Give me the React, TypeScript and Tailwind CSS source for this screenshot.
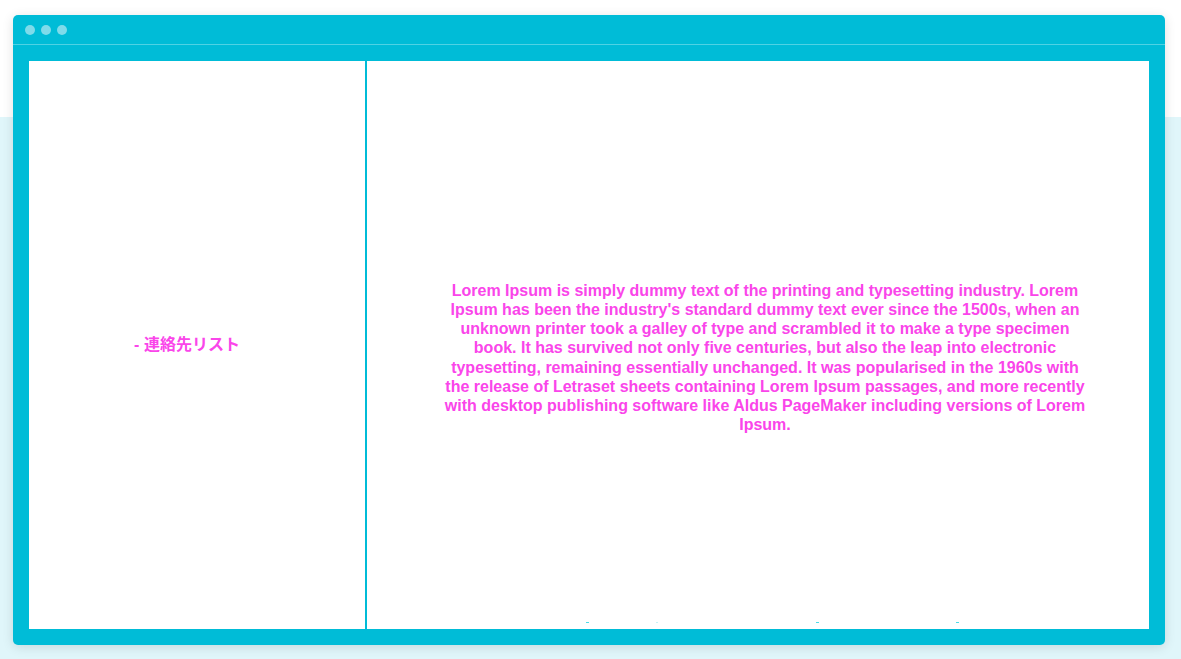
export default function App() {
  const lorem =
    "Lorem Ipsum is simply dummy text of the printing and typesetting industry. Lorem Ipsum has been the industry's standard dummy text ever since the 1500s, when an unknown printer took a galley of type and scrambled it to make a type specimen book. It has survived not only five centuries, but also the leap into electronic typesetting, remaining essentially unchanged. It was popularised in the 1960s with the release of Letraset sheets containing Lorem Ipsum passages, and more recently with desktop publishing software like Aldus PageMaker including versions of Lorem Ipsum.";

  return (
    <div className="relative h-[659px] w-[1181px] overflow-hidden bg-white font-['Liberation_Sans','Noto_Sans_CJK_JP',sans-serif]">
      <div className="absolute inset-x-0 top-[117px] bottom-0 bg-[#e0f6fa]" />
      <div className="relative pt-[15px] pl-[13px]">
        <div className="flex h-[630px] w-[1152px] flex-col rounded-[5px] bg-[#00bcd7] shadow-[0_2px_12px_rgba(0,0,0,0.12)]">
          <div className="flex h-[30px] items-center gap-[6px] border-b border-[#4fd2e4] pl-[12px]">
            <span className="h-[10px] w-[10px] rounded-full bg-[#7fdbea]" />
            <span className="h-[10px] w-[10px] rounded-full bg-[#7fdbea]" />
            <span className="h-[10px] w-[10px] rounded-full bg-[#7fdbea]" />
          </div>
          <div className="flex flex-1 px-[16px] pt-[16px] pb-[16px]">
            <div className="flex w-[336px] items-center justify-center bg-white pr-[20px]">
              <span className="text-[16px] font-bold text-[#fa45ea]">- 連絡先リスト</span>
            </div>
            <div className="w-[2px] bg-[#00bcd7]" />
            <div className="relative flex flex-1 items-center justify-center bg-white pt-[25px] pl-[14px]">
              <p className="w-[648px] text-center text-[16px] leading-[19.2px] font-bold text-[#fa45ea]">
                {lorem}
              </p>
              <span className="absolute top-[561px] left-[219px] h-[1px] w-[3px] bg-[#4fdbe8]" />
              <span className="absolute top-[561px] left-[289px] h-[1px] w-[2px] bg-[#c8f2f6]" />
              <span className="absolute top-[561px] left-[449px] h-[1px] w-[3px] bg-[#4fdbe8]" />
              <span className="absolute top-[561px] left-[589px] h-[1px] w-[3px] bg-[#4fdbe8]" />
            </div>
          </div>
        </div>
      </div>
    </div>
  );
}
